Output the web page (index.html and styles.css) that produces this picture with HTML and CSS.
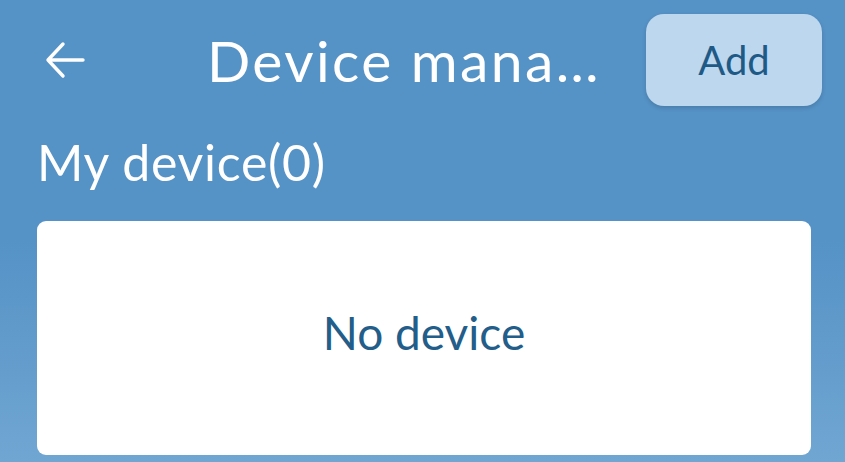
FILE: index.html
```html
<!DOCTYPE html>
<html lang="en">
<head>
    <meta charset="UTF-8">
    <meta name="viewport" content="width=device-width, initial-scale=1.0">
    <title>Device management</title>
    <link rel="stylesheet" href="styles.css">
</head>
<body>

    <div class="header">
        <button type="button" class="back-btn" aria-label="Back">
            <svg width="40" height="38" viewBox="0 0 40 38">
                <path d="M38 19 H3 M18 3 L3 19 L18 35" fill="none" stroke="white" stroke-width="3.4" stroke-linecap="round" stroke-linejoin="round"/>
            </svg>
        </button>
        <h1 class="title">Device management</h1>
        <button type="button" class="add-btn">Add</button>
    </div>

    <div class="container">
        <h2 class="section-title">My device(0)</h2>
        <div class="card">
            <p class="empty">No device</p>
        </div>
    </div>

</body>
</html>
```

FILE: styles.css
```css
html, body {
    height: 100%;
}

body {
    font-family: Lato, "Noto Sans", sans-serif;
    background: linear-gradient(to bottom, #5592c6 0%, #5592c6 52%, #70a6d2 100%);
    margin: 0;
    padding: 0;
    overflow: hidden;
}

.header {
    display: flex;
    align-items: center;
    height: 92px;
    padding: 14px 23px 0 45px;
}

.back-btn {
    background: none;
    border: none;
    padding: 0;
    width: 44px;
    height: 40px;
    display: flex;
    align-items: center;
    cursor: pointer;
}

.title {
    width: 402px;
    margin: 0 37px 0 118px;
    color: white;
    font-size: 57px;
    font-weight: 400;
    letter-spacing: 2.4px;
    white-space: nowrap;
    overflow: hidden;
    text-overflow: ellipsis;
}

.add-btn {
    width: 176px;
    height: 92px;
    border: none;
    border-radius: 18px;
    background-color: #bcd7ee;
    color: #1f5a87;
    font-family: inherit;
    font-size: 40px;
    box-shadow: 0 2px 4px rgba(0, 0, 0, 0.15);
    cursor: pointer;
}

.container {
    padding: 0 34px 0 37px;
}

.section-title {
    margin: 26px 0 0;
    color: white;
    font-size: 50px;
    font-weight: 400;
    letter-spacing: 0.7px;
    line-height: 60px;
}

.card {
    margin-top: 29px;
    height: 234px;
    background-color: white;
    border-radius: 9px;
    display: flex;
    justify-content: center;
}

.empty {
    margin: 87px 0 0;
    color: #235d89;
    font-size: 46px;
    line-height: 50px;
}
```
